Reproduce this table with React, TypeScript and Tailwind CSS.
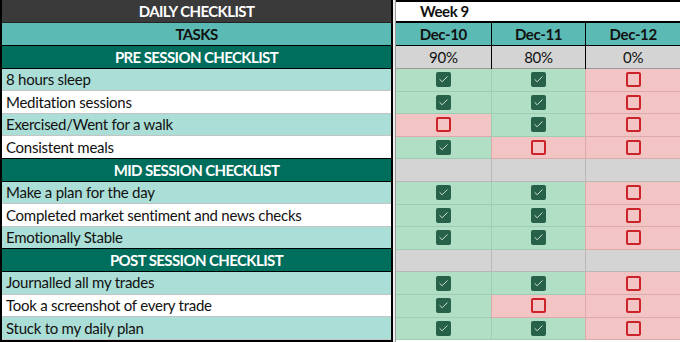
import { Check } from 'lucide-react'

type Row =
  | { kind: 'section'; label: string }
  | { kind: 'task'; label: string; done: boolean[]; shade: boolean }

const rows: Row[] = [
  { kind: 'section', label: 'PRE SESSION CHECKLIST' },
  { kind: 'task', label: '8 hours sleep', done: [true, true, false], shade: true },
  { kind: 'task', label: 'Meditation sessions', done: [true, true, false], shade: false },
  { kind: 'task', label: 'Exercised/Went for a walk', done: [false, true, false], shade: true },
  { kind: 'task', label: 'Consistent meals', done: [true, false, false], shade: false },
  { kind: 'section', label: 'MID SESSION CHECKLIST' },
  { kind: 'task', label: 'Make a plan for the day', done: [true, true, false], shade: true },
  { kind: 'task', label: 'Completed market sentiment and news checks', done: [true, true, false], shade: false },
  { kind: 'task', label: 'Emotionally Stable', done: [true, true, false], shade: true },
  { kind: 'section', label: 'POST SESSION CHECKLIST' },
  { kind: 'task', label: 'Journalled all my trades', done: [true, true, false], shade: true },
  { kind: 'task', label: 'Took a screenshot of every trade', done: [true, false, false], shade: false },
  { kind: 'task', label: 'Stuck to my daily plan', done: [true, true, false], shade: true },
]

const days = [
  { date: 'Dec-10', pct: '90%' },
  { date: 'Dec-11', pct: '80%' },
  { date: 'Dec-12', pct: '0%' },
]

function Box({ checked }: { checked: boolean }) {
  if (checked) {
    return (
      <span className="flex h-[15px] w-[15px] items-center justify-center rounded-[2px] bg-[#28614a]">
        <Check className="h-[11px] w-[11px] text-[#d5ebe0]" strokeWidth={2} />
      </span>
    )
  }
  return <span className="block h-[15px] w-[15px] rounded-[2px] border-2 border-[#cc2229]" />
}

export default function App() {
  return (
    <div className="flex h-[342px] w-[680px] bg-white font-['Lato',sans-serif] text-[15px] tracking-[-0.25px] text-[#111]">
      {/* tasks column */}
      <div className="flex w-[393px] flex-col border-x-2 border-b-2 border-black">
        <div className="flex h-[23px] items-center justify-center border-b border-[#222] bg-[#3a3a3a] font-bold tracking-[-0.6px] text-white">
          DAILY CHECKLIST
        </div>
        <div className="flex h-[23px] items-center justify-center border-b border-black bg-[#5bbab4] font-bold tracking-[-0.6px]">
          TASKS
        </div>
        {rows.map((r, i) =>
          r.kind === 'section' ? (
            <div
              key={i}
              className="flex h-[22.6px] items-center justify-center border-b border-black bg-[#006e5c] font-bold tracking-[-0.6px] text-white"
            >
              {r.label}
            </div>
          ) : (
            <div
              key={i}
              className={`flex h-[22.6px] items-center border-b px-[4px] ${
                r.shade ? 'bg-[#abded6]' : 'bg-white'
              } ${rows[i + 1]?.kind === 'section' ? 'border-black' : 'border-[#c4c4c4]'}`}
            >
              {r.label}
            </div>
          ),
        )}
      </div>

      <div className="w-[3px] border-r border-[#9a9a9a] bg-[#ececec]" />

      {/* week grid */}
      <div className="flex flex-1 flex-col">
        <div className="flex h-[23px] items-center border-y-2 border-black pl-[24px] font-bold tracking-[-0.4px]">Week 9</div>
        <div className="grid h-[23px] grid-cols-3 border-b border-black bg-[#5bbab4] font-bold tracking-[-0.4px]">
          {days.map((d, i) => (
            <div key={d.date} className={`flex items-center justify-center ${i > 0 ? 'border-l border-black' : ''}`}>
              {d.date}
            </div>
          ))}
        </div>
        <div className="grid h-[23px] grid-cols-3 border-b border-[#9a9a9a] bg-[#d4d4d4]">
          {days.map((d, i) => (
            <div key={d.pct} className={`flex items-center justify-center ${i > 0 ? 'border-l border-black' : ''}`}>
              {d.pct}
            </div>
          ))}
        </div>
        {rows.slice(1).map((r, i) =>
          r.kind === 'section' ? (
            <div key={i} className="grid h-[22.6px] grid-cols-3 border-b border-[#b8b8b8] bg-[#d4d4d4]">
              {[0, 1, 2].map((c) => (
                <div key={c} className={c > 0 ? 'border-l border-[#b8b8b8]' : ''} />
              ))}
            </div>
          ) : (
            <div key={i} className="grid h-[22.6px] grid-cols-3">
              {r.done.map((ok, c) => (
                <div
                  key={c}
                  className={`flex items-center justify-center border-b ${c > 0 ? 'border-l' : ''} ${
                    ok ? 'border-[#9fcdb3] bg-[#b0dfc6]' : 'border-[#dcaaaa] bg-[#f2c4c4]'
                  }`}
                >
                  <Box checked={ok} />
                </div>
              ))}
            </div>
          ),
        )}
      </div>
    </div>
  )
}
